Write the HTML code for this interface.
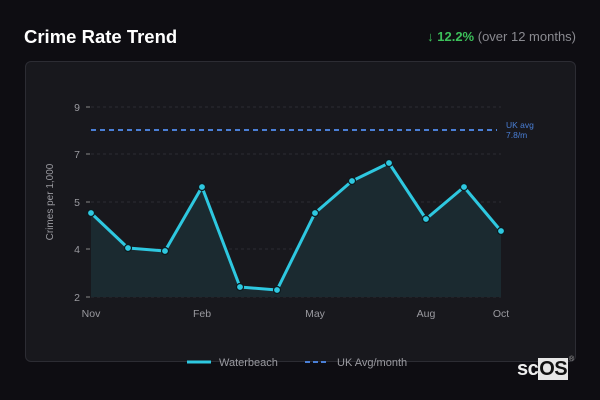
<!DOCTYPE html>
<html><head><style>
body{margin:0;width:600px;height:400px;background:#0e0d12;font-family:"Liberation Sans",sans-serif;overflow:hidden;position:relative}
.t{position:absolute;left:24px;top:26px;color:#fff;font-weight:bold;font-size:18.5px}
.c{position:absolute;right:24px;top:29px;font-size:13px;color:#8a8a90}
.c b{color:#3cc05a}
.card{position:absolute;left:25px;top:61px;width:549px;height:299px;background:#18181d;border:1px solid #2c2c33;border-radius:6px}
.logo{position:absolute;left:517px;top:358px;font-size:20px;font-weight:bold;color:#eee;letter-spacing:-0.5px}
.logo span{background:#e6e6e6;color:#111;padding:0 1px}
.r{position:absolute;left:569px;top:356px;font-size:7px;color:#aaa}
</style></head><body>
<div class="t">Crime Rate Trend</div>
<div class="c"><b>↓ 12.2%</b> (over 12 months)</div>
<div class="card"></div>
<svg width="600" height="400" style="position:absolute;left:0;top:0" font-family="Liberation Sans, sans-serif">
<g stroke="#2c2c32" stroke-dasharray="3,3" stroke-width="1">
<line x1="91" y1="107" x2="501" y2="107"/><line x1="91" y1="154" x2="501" y2="154"/><line x1="91" y1="202" x2="501" y2="202"/><line x1="91" y1="249" x2="501" y2="249"/><line x1="91" y1="297" x2="501" y2="297"/>
</g>
<g stroke="#888" stroke-width="1"><line x1="86" y1="107" x2="90" y2="107"/><line x1="86" y1="154" x2="90" y2="154"/><line x1="86" y1="202" x2="90" y2="202"/><line x1="86" y1="249" x2="90" y2="249"/><line x1="86" y1="297" x2="90" y2="297"/></g>
<g fill="#9a9aa0" font-size="10.5" text-anchor="end"><text x="80" y="111">9</text><text x="80" y="158">7</text><text x="80" y="206">5</text><text x="80" y="253">4</text><text x="80" y="301">2</text></g>
<text transform="translate(53,202) rotate(-90)" fill="#9a9aa0" font-size="10" text-anchor="middle">Crimes per 1,000</text>
<line x1="91" y1="130" x2="497" y2="130" stroke="#4a7fd6" stroke-width="2" stroke-dasharray="5,4"/>
<text x="506" y="128" fill="#4a7fd6" font-size="8.5">UK avg</text><text x="506" y="138" fill="#4a7fd6" font-size="8.5">7.8/m</text>
<path d="M91,213 L128,248 L165,251 L202,187 L240,287 L277,290 L315,213 L352,181 L389,163 L426,219 L464,187 L501,231 L501,297 L91,297Z" fill="#1b2a30"/>
<path d="M91,213 L128,248 L165,251 L202,187 L240,287 L277,290 L315,213 L352,181 L389,163 L426,219 L464,187 L501,231" fill="none" stroke="#2ec8e0" stroke-width="3" stroke-linejoin="round"/>
<g fill="#2ec8e0" stroke="#0e1a1e" stroke-width="1.2">
<circle cx="91" cy="213" r="3.5"/><circle cx="128" cy="248" r="3.5"/><circle cx="165" cy="251" r="3.5"/><circle cx="202" cy="187" r="3.5"/><circle cx="240" cy="287" r="3.5"/><circle cx="277" cy="290" r="3.5"/><circle cx="315" cy="213" r="3.5"/><circle cx="352" cy="181" r="3.5"/><circle cx="389" cy="163" r="3.5"/><circle cx="426" cy="219" r="3.5"/><circle cx="464" cy="187" r="3.5"/><circle cx="501" cy="231" r="3.5"/>
</g>
<g fill="#9a9aa0" font-size="10.5" text-anchor="middle"><text x="91" y="317">Nov</text><text x="202" y="317">Feb</text><text x="315" y="317">May</text><text x="426" y="317">Aug</text><text x="501" y="317">Oct</text></g>
<line x1="187" y1="362" x2="211" y2="362" stroke="#2ec8e0" stroke-width="3"/>
<text x="219" y="366" fill="#9a9aa0" font-size="11">Waterbeach</text>
<line x1="305" y1="362" x2="329" y2="362" stroke="#4a7fd6" stroke-width="2" stroke-dasharray="5,3"/>
<text x="337" y="366" fill="#9a9aa0" font-size="11">UK Avg/month</text>
</svg>
<div class="logo">sc<span>OS</span></div>
<div class="r">®</div>
</body></html>
